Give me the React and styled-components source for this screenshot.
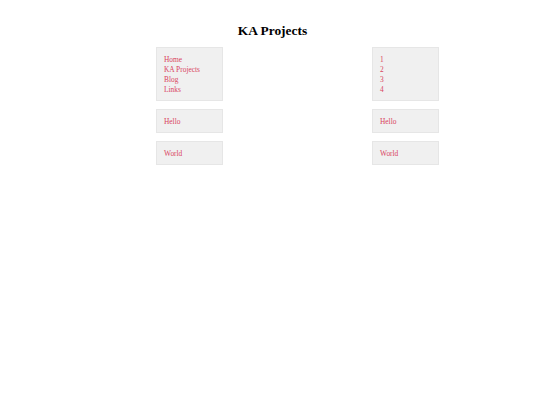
import React from "react";
import styled, { createGlobalStyle } from "styled-components";

const GlobalStyle = createGlobalStyle`
  body {
    margin: 0;
    background: #ffffff;
    font-family: "Liberation Serif", "Times New Roman", serif;
  }
`;

const Page = styled.div`
  display: flex;
  flex-direction: column;
  width: 540px;
`;

const Title = styled.h1`
  margin: 23px 0 0 0;
  padding-left: 5px;
  font-size: 13.4px;
  line-height: 16px;
  font-weight: bold;
  text-align: center;
  color: #000;
`;

const Columns = styled.div`
  display: flex;
  justify-content: space-between;
  padding: 0 101px 0 156px;
  margin-top: 8px;
`;

const Column = styled.div`
  display: flex;
  flex-direction: column;
  gap: 8px;
  width: 67px;
`;

const Box = styled.div`
  box-sizing: border-box;
  background: #f0f0f0;
  border: 1px solid #e6e6e6;
  padding: ${(p) => (p.$list ? "7px 8px 5px 7px" : "7px 8px 5px 7px")};
  display: flex;
  flex-direction: column;
`;

const Item = styled.span`
  font-size: 7.4px;
  line-height: 10px;
  color: #d9455f;
  white-space: nowrap;
`;

const navLinks = ["Home", "KA Projects", "Blog", "Links"];
const numbers = ["1", "2", "3", "4"];

const Side = ({ items }) => (
  <Column>
    <Box $list>
      {items.map((t) => (
        <Item key={t}>{t}</Item>
      ))}
    </Box>
    <Box>
      <Item>Hello</Item>
    </Box>
    <Box>
      <Item>World</Item>
    </Box>
  </Column>
);

const App = () => {
  return (
    <>
      <GlobalStyle />
      <Page>
        <Title>KA Projects</Title>
        <Columns>
          <Side items={navLinks} />
          <Side items={numbers} />
        </Columns>
      </Page>
    </>
  );
};

export default App;
